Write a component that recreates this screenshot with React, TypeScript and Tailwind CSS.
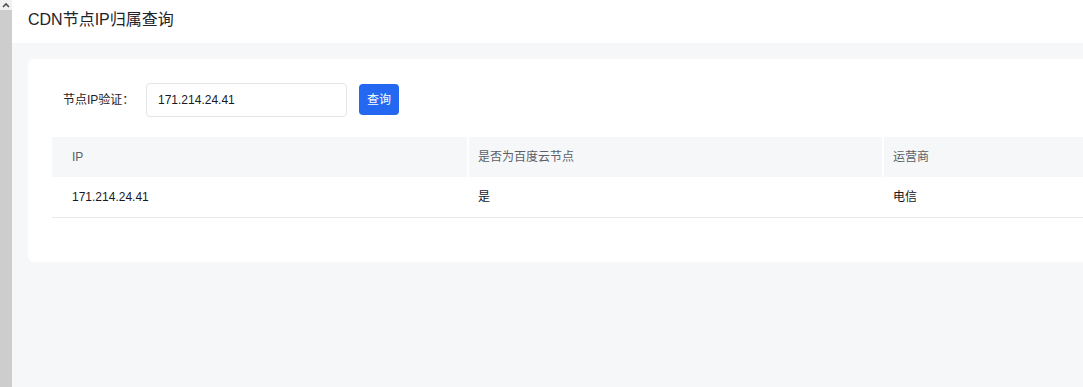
import React from "react";

const font = { fontFamily: '"Liberation Sans", Arial, "Noto Sans CJK SC", sans-serif' };

export default function App() {
  const cols = [
    { title: "IP", value: "171.214.24.41", cls: "w-[417px] pl-[20px] border-r-2" },
    { title: "是否为百度云节点", value: "是", cls: "w-[415px] pl-[9px] border-r-2" },
    { title: "运营商", value: "电信", cls: "w-[416px] pl-[9px]" },
  ];
  return (
    <div className="w-[1083px] h-[387px] overflow-hidden flex bg-[#f6f7f9]" style={font}>
      <div className="w-[12px] h-full flex flex-col shrink-0 bg-[#cdcdcd]">
        <div className="h-[10px] bg-[#f1f1f1] flex items-center justify-center">
          <svg width="8" height="6" viewBox="0 0 8 6">
            <path d="M1 5 L4 2 L7 5" stroke="#505050" strokeWidth="1.6" fill="none" />
          </svg>
        </div>
      </div>
      <div className="flex-1 flex flex-col min-w-0">
        <div className="h-[43px] bg-white flex items-center pl-[16px] shrink-0">
          <span className="text-[16px] text-[#1f2329] leading-none pb-[4px]">CDN节点IP归属查询</span>
        </div>
        <div className="pt-[16px] pl-[16px]">
          <div className="w-[1300px] bg-white rounded-[6px] pt-[24px] pb-[44px] pl-[24px]">
            <div className="flex items-center h-[33px]">
              <span className="text-[12px] text-[#1f2329] ml-[11px] w-[83px]">节点IP验证：</span>
              <div className="w-[201px] h-[34px] border border-[#e3e5ea] rounded-[4px] flex items-center pl-[11px] text-[12px] text-[#151a26]">
                171.214.24.41
              </div>
              <button className="ml-[12px] w-[40px] h-[31px] rounded-[4px] bg-[#2468f2] text-white text-[12px] flex items-center justify-center">
                查询
              </button>
            </div>
            <div className="mt-[21px] w-[1248px]">
              <div className="flex h-[40px] bg-[#f6f7f9]">
                {cols.map((c) => (
                  <div
                    key={c.title}
                    className={`${c.cls} border-white flex items-center text-[12px] text-[#5c5f66]`}
                  >
                    {c.title}
                  </div>
                ))}
              </div>
              <div className="flex h-[41px] border-b border-[#e8e9eb]">
                {cols.map((c) => (
                  <div
                    key={c.title}
                    className={`${c.cls} border-transparent flex items-center text-[12px] text-[#151a26]`}
                  >
                    {c.value}
                  </div>
                ))}
              </div>
            </div>
          </div>
        </div>
      </div>
    </div>
  );
}
